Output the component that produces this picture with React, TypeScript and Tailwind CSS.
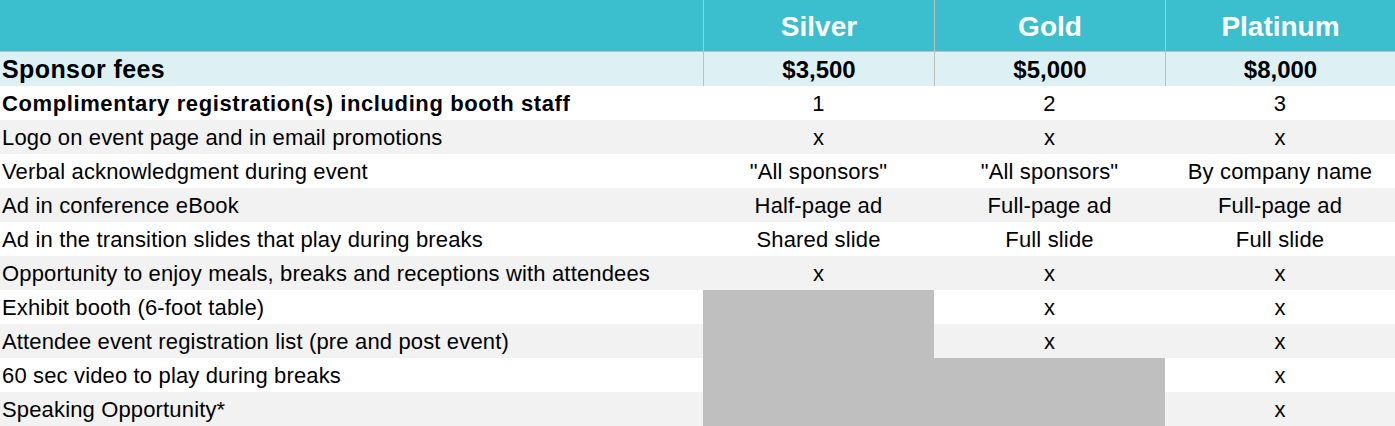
import React from "react";

type Row = { label: string; bold?: boolean; cells: (string | null)[] };

const rows: Row[] = [
  { label: "Complimentary registration(s) including booth staff", bold: true, cells: ["1", "2", "3"] },
  { label: "Logo on event page and in email promotions", cells: ["x", "x", "x"] },
  { label: "Verbal acknowledgment during event", cells: ['"All sponsors"', '"All sponsors"', "By company name"] },
  { label: "Ad in conference eBook", cells: ["Half-page ad", "Full-page ad", "Full-page ad"] },
  { label: "Ad in the transition slides that play during breaks", cells: ["Shared slide", "Full slide", "Full slide"] },
  { label: "Opportunity to enjoy meals, breaks and receptions with attendees", cells: ["x", "x", "x"] },
  { label: "Exhibit booth (6-foot table)", cells: [null, "x", "x"] },
  { label: "Attendee event registration list (pre and post event)", cells: [null, "x", "x"] },
  { label: "60 sec video to play during breaks", cells: [null, null, "x"] },
  { label: "Speaking Opportunity*", cells: [null, null, "x"] },
];

export default function App() {
  return (
    <div
      className="w-[1395px] h-[426px] overflow-hidden bg-white text-black"
      style={{ fontFamily: '"Liberation Sans", Arial, sans-serif' }}
    >
      <div className="grid grid-cols-[703px_231px_231px_230px]">
        {/* header */}
        <div className="h-[52px] bg-[#3bbfcf] border-b border-[#bfbfbf]" />
        {["Silver", "Gold", "Platinum"].map((t) => (
          <div
            key={t}
            className="h-[52px] bg-[#3bbfcf] border-b border-l border-[#bfbfbf] flex items-center justify-center text-white font-bold text-[28px] pt-[2px]"
          >
            {t}
          </div>
        ))}
        {/* fees */}
        <div className="h-[34px] bg-[#ddf1f5] flex items-center pl-[2px] pt-[2px] font-bold text-[25px] tracking-[0.4px]">
          Sponsor fees
        </div>
        {["$3,500", "$5,000", "$8,000"].map((t) => (
          <div
            key={t}
            className="h-[34px] bg-[#ddf1f5] border-l border-[#bfbfbf] flex items-center justify-center pt-[2px] font-bold text-[24px]"
          >
            {t}
          </div>
        ))}
        {rows.map((r, i) => {
          const bg = i % 2 === 0 ? "bg-white" : "bg-[#f2f2f2]";
          return (
            <React.Fragment key={r.label}>
              <div
                className={`h-[34px] ${bg} flex items-center pl-[2px] text-[22px] whitespace-nowrap ${
                  r.bold ? "font-bold tracking-[0.6px]" : "tracking-[0.15px]"
                }`}
              >
                {r.label}
              </div>
              {r.cells.map((c, j) => (
                <div
                  key={j}
                  className={`h-[34px] ${c === null ? "bg-[#bfbfbf]" : bg} flex items-center justify-center text-[22px] tracking-[0.15px] whitespace-nowrap`}
                >
                  {c}
                </div>
              ))}
            </React.Fragment>
          );
        })}
      </div>
    </div>
  );
}
